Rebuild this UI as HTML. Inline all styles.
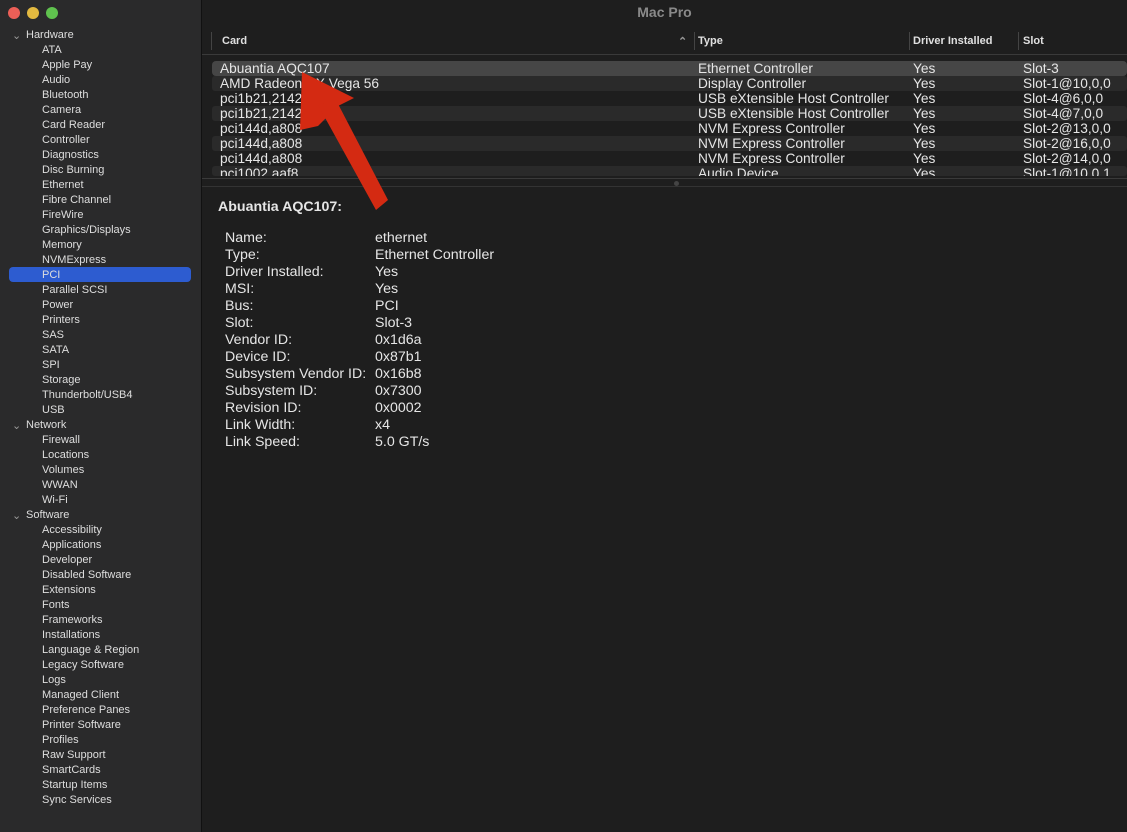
<!DOCTYPE html>
<html><head><style>
body{margin:0;width:1127px;height:832px;background:#1e1e1e;font-family:"Liberation Sans",Helvetica,sans-serif;overflow:hidden;position:relative;color:#dcdcdc}
#side{position:absolute;left:0;top:0;width:201px;height:832px;background:#2a2a2b;border-right:1px solid #111}
.dot{position:absolute;top:7px;width:12px;height:12px;border-radius:50%}
.it{position:absolute;font-size:11px;color:#dedede;white-space:nowrap}
#title{position:absolute;left:202px;right:0;top:0;height:28px;text-align:center;line-height:24px;font-size:14px;font-weight:bold;color:#8a8a8a}
.hdr{position:absolute;top:35px;font-size:11px;font-weight:bold;color:#e0e0e0}
.row{position:absolute;left:212px;width:915px;height:15px;font-size:13.7px;line-height:15px;color:#e6e6e6;overflow:hidden}
.row span{position:absolute;top:0}
.d{position:absolute;font-size:14.2px;color:#e6e6e6}
</style></head><body>
<div id="side">
<div class="dot" style="left:8px;background:#ec5f57"></div>
<div class="dot" style="left:27px;background:#e2b940"></div>
<div class="dot" style="left:46px;background:#5fc24e"></div>
<div id="items"></div>
</div>
<div id="title">Mac Pro</div>
<div style="position:absolute;left:211px;top:32px;width:1px;height:18px;background:#444"></div>
<div class="hdr" style="left:222px">Card</div>
<div class="hdr" style="left:678px;color:#999">⌃</div>
<div style="position:absolute;left:694px;top:32px;width:1px;height:18px;background:#444"></div>
<div class="hdr" style="left:698px">Type</div>
<div style="position:absolute;left:909px;top:32px;width:1px;height:18px;background:#444"></div>
<div class="hdr" style="left:913px">Driver Installed</div>
<div style="position:absolute;left:1018px;top:32px;width:1px;height:18px;background:#444"></div>
<div class="hdr" style="left:1023px">Slot</div>
<div style="position:absolute;left:202px;top:54px;right:0;height:1px;background:#3a3a3a"></div>
<div id="rows"></div>
<div style="position:absolute;left:202px;top:178px;right:0;height:1px;background:#3a3a3a"></div>
<div style="position:absolute;left:674px;top:181px;width:5px;height:5px;border-radius:50%;background:#444"></div>
<div style="position:absolute;left:202px;top:186px;right:0;height:1px;background:#333"></div>
<div class="d" style="left:218px;top:199px;font-weight:bold">Abuantia AQC107:</div>
<div id="det"></div>
<svg style="position:absolute;left:0;top:0" width="1127" height="832">
<polygon points="302,72 354,98 338,106 318,126 300,130" fill="#d42a12"/>
<polygon points="318,105 336,100 388,200 376,210" fill="#d42a12"/>
</svg>
<script>
var s=[["Hardware",0],"ATA","Apple Pay","Audio","Bluetooth","Camera","Card Reader","Controller","Diagnostics","Disc Burning","Ethernet","Fibre Channel","FireWire","Graphics/Displays","Memory","NVMExpress","PCI","Parallel SCSI","Power","Printers","SAS","SATA","SPI","Storage","Thunderbolt/USB4","USB",["Network",0],"Firewall","Locations","Volumes","WWAN","Wi-Fi",["Software",0],"Accessibility","Applications","Developer","Disabled Software","Extensions","Fonts","Frameworks","Installations","Language & Region","Legacy Software","Logs","Managed Client","Preference Panes","Printer Software","Profiles","Raw Support","SmartCards","Startup Items","Sync Services"];
var h="";s.forEach(function(x,i){var y=29+i*15;if(Array.isArray(x)){h+='<div class="it" style="left:12px;top:'+y+'px;color:#999">⌄</div><div class="it" style="left:26px;top:'+y+'px">'+x[0]+'</div>';}else{if(x=="PCI")h+='<div style="position:absolute;left:9px;top:'+(y-2)+'px;width:182px;height:15px;border-radius:4px;background:#2d5cd0"></div>';h+='<div class="it" style="left:42px;top:'+y+'px">'+x.replace("&","&amp;")+'</div>';}});
document.getElementById("items").innerHTML=h;
var r=[["Abuantia AQC107","Ethernet Controller","Slot-3"],["AMD Radeon RX Vega 56","Display Controller","Slot-1@10,0,0"],["pci1b21,2142","USB eXtensible Host Controller","Slot-4@6,0,0"],["pci1b21,2142","USB eXtensible Host Controller","Slot-4@7,0,0"],["pci144d,a808","NVM Express Controller","Slot-2@13,0,0"],["pci144d,a808","NVM Express Controller","Slot-2@16,0,0"],["pci144d,a808","NVM Express Controller","Slot-2@14,0,0"],["pci1002,aaf8","Audio Device","Slot-1@10,0,1"]];
h="";r.forEach(function(x,i){var bg=i==0?"#464646":(i%2?"#2a2a2a":"#1e1e1e");var hh=i==7?10:15;h+='<div class="row" style="top:'+(61+i*15)+'px;height:'+hh+'px;background:'+bg+';border-radius:'+(i==0?4:3)+'px"><span style="left:8px">'+x[0]+'</span><span style="left:486px">'+x[1]+'</span><span style="left:701px">Yes</span><span style="left:811px">'+x[2]+'</span></div>';});
document.getElementById("rows").innerHTML=h;
var d=[["Name:","ethernet"],["Type:","Ethernet Controller"],["Driver Installed:","Yes"],["MSI:","Yes"],["Bus:","PCI"],["Slot:","Slot-3"],["Vendor ID:","0x1d6a"],["Device ID:","0x87b1"],["Subsystem Vendor ID:","0x16b8"],["Subsystem ID:","0x7300"],["Revision ID:","0x0002"],["Link Width:","x4"],["Link Speed:","5.0 GT/s"]];
h="";d.forEach(function(x,i){var y=230+i*17;h+='<div class="d" style="left:225px;top:'+y+'px">'+x[0]+'</div><div class="d" style="left:375px;top:'+y+'px">'+x[1]+'</div>';});
document.getElementById("det").innerHTML=h;
</script>
</body></html>
